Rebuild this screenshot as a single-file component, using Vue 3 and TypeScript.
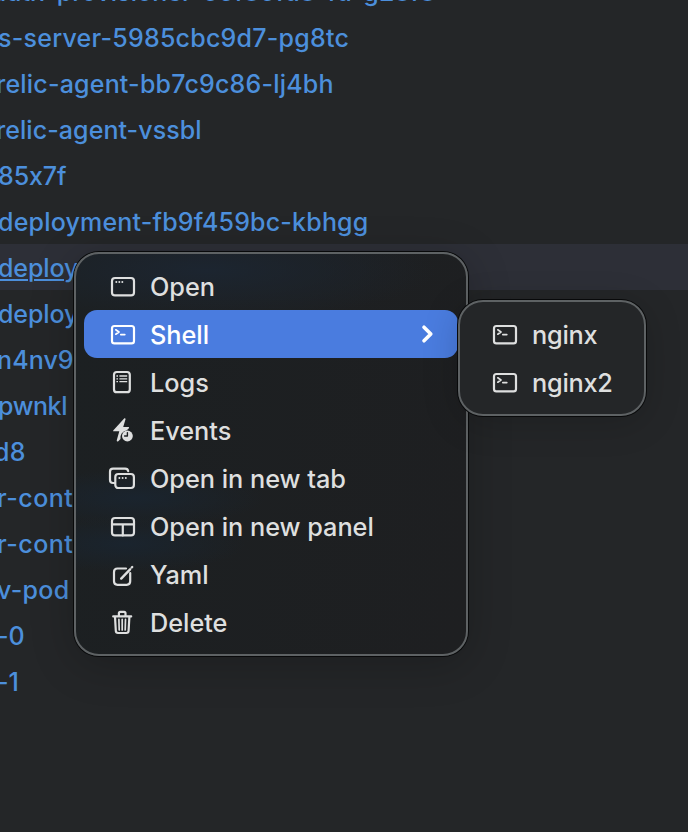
<script setup lang="ts">
interface Pod {
  name: string
  shift: number
  spacing: number
  active?: boolean
}

interface Dot {
  x: number
  y: number
}

type IconName = 'open' | 'shell' | 'logs' | 'events' | 'tabs' | 'panel' | 'edit' | 'trash'

interface Action {
  label: string
  icon: IconName
  submenu?: boolean
}

const pods: Pod[] = [
  { name: 'auth-provisioner-66f86fd8-fd-g28f8', shift: -8, spacing: 0.08 },
  { name: 's-server-5985cbc9d7-pg8tc', shift: -2, spacing: 0.24 },
  { name: 'relic-agent-bb7c9c86-lj4bh', shift: -4, spacing: 0.2 },
  { name: 'relic-agent-vssbl', shift: -4, spacing: 0.06 },
  { name: '85x7f', shift: -2, spacing: -0.1 },
  { name: 'deployment-fb9f459bc-kbhgg', shift: -2, spacing: 0.19 },
  { name: 'deploy', shift: -2, spacing: -0.1, active: true },
  { name: 'deploy', shift: -2, spacing: -0.1 },
  { name: 'n4nv9', shift: -3, spacing: 0.1 },
  { name: 'pwnkl', shift: -2, spacing: -0.4 },
  { name: 'd8', shift: -6, spacing: 0.3 },
  { name: 'r-cont', shift: -3, spacing: 0.5 },
  { name: 'r-cont', shift: -3, spacing: 0.5 },
  { name: 'v-pod', shift: -3, spacing: 0.3 },
  { name: '-0', shift: -3, spacing: 0 },
  { name: '-1', shift: -3, spacing: 0 },
]

const actions: Action[] = [
  { label: 'Open', icon: 'open' },
  { label: 'Shell', icon: 'shell', submenu: true },
  { label: 'Logs', icon: 'logs' },
  { label: 'Events', icon: 'events' },
  { label: 'Open in new tab', icon: 'tabs' },
  { label: 'Open in new panel', icon: 'panel' },
  { label: 'Yaml', icon: 'edit' },
  { label: 'Delete', icon: 'trash' },
]

const containers: Action[] = [
  { label: 'nginx', icon: 'shell' },
  { label: 'nginx2', icon: 'shell' },
]

const openDots: Dot[] = [{ x: 10.3, y: 12 }, { x: 13.3, y: 12 }, { x: 16.3, y: 12 }]
const tabDots: Dot[] = [{ x: 13.4, y: 16 }, { x: 16.6, y: 16 }, { x: 19.8, y: 16 }]

const menus = [
  { key: 'main', items: actions },
  { key: 'sub', items: containers },
]
</script>

<template>
  <main class="screen">
    <ul class="pods">
      <li v-for="(pod, i) in pods" :key="i" class="pod" :class="{ active: pod.active }">
        <a class="link" :style="{ marginLeft: pod.shift + 'px', letterSpacing: pod.spacing + 'px' }">{{ pod.name }}</a>
      </li>
    </ul>

    <ul v-for="menu in menus" :key="menu.key" class="menu" :class="menu.key">
      <li v-for="item in menu.items" :key="item.label" class="item" :class="{ selected: item.submenu }">
        <svg class="icon" viewBox="0 0 32 32">
          <template v-if="item.icon === 'open'">
            <rect x="6" y="8" width="22" height="17.4" rx="3" />
            <circle v-for="d in openDots" :key="d.x" class="solid" :cx="d.x" :cy="d.y" r="1" />
          </template>
          <template v-else-if="item.icon === 'shell'">
            <rect x="6" y="8" width="22" height="17.4" rx="2.4" />
            <path class="fine" d="M9.8 11.8 13 14l-3.2 2.2M14.8 16.6h4" />
          </template>
          <template v-else-if="item.icon === 'logs'">
            <rect x="8" y="6" width="15.8" height="20.2" rx="2.8" />
            <path class="hair" d="M10.4 10h1.6M10.4 12.8h1.6M10.4 15.6h1.6M13.4 10h7.8M13.4 12.8h7.8M13.4 15.6h7.8" />
          </template>
          <template v-else-if="item.icon === 'events'">
            <path class="solid" d="M18.4 4.2 7.2 16.4q-.4.8.5.9h5.6L10.7 26.5q.2 1.5 1.6.7l2.2-2.3q-.6-6.8 6.3-8.6l2.3-2.3q.2-.9-.7-.9h-5.2l2.4-8.1q-.2-1.1-1.2-.8Z" />
            <circle class="solid" cx="21.4" cy="22" r="5.4" />
            <path class="cut" d="M21.4 18.6V22h-2.8" />
          </template>
          <template v-else-if="item.icon === 'tabs'">
            <path d="M8.5 21H7q-3 0-3-3V9.7q0-3 3-3h12.2q2.6 0 3 2.5" />
            <rect x="9.3" y="12" width="18.6" height="14" rx="3" />
            <circle v-for="d in tabDots" :key="d.x" class="solid" :cx="d.x" :cy="d.y" r="1" />
          </template>
          <template v-else-if="item.icon === 'panel'">
            <rect x="6" y="8" width="22" height="17.4" rx="3" />
            <path d="M6 14.4h22M16.8 14.4v11" />
          </template>
          <template v-else-if="item.icon === 'edit'">
            <path d="M20 10.5h-8.5q-3.5 0-3.5 3.5v9.3q0 3.500 3.500 3.500h9.2q3.500 0 3.500-3.500V15" />
            <path class="pencil" d="m15.2 20.6 8.900-9.300M25.700 9.500l.5-.5" />
          </template>
          <template v-else>
            <path d="M7.2 10.4h18M12.900 10V7.300q0-1.400 1.400-1.400h3.800q1.400 0 1.400 1.400V10M9 10.800l.8 14q.1 2.200 2.200 2.200h8.400q2.100 0 2.200-2.200l.8-14" />
            <path class="fine" d="m12.9 13.4.3 10.600M16.200 13.400V24M19.500 13.400 19.200 24" />
          </template>
        </svg>
        <span class="label">{{ item.label }}</span>
        <svg v-if="item.submenu" class="chevron" viewBox="0 0 16 24">
          <path d="m4 5.2 6.8 6.8L4 18.8" />
        </svg>
      </li>
    </ul>
  </main>
</template>

<style>
body {
  margin: 0;
  background: #242628;
}
</style>

<style scoped>
.screen {
  position: relative;
  width: 688px;
  height: 832px;
  overflow: hidden;
  background: #242628;
  font-family: Inter, 'Liberation Sans', sans-serif;
  font-feature-settings: 'calt' 0;
}

ul {
  margin: 0;
  padding: 0;
  list-style: none;
}

.pods {
  margin-top: -32px;
}

.pod {
  display: flex;
  align-items: center;
  height: 46px;
}

.pod.active {
  background: #2d2f37;
}

.link {
  padding-top: 2px;
  color: #4c8fdc;
  font-size: 25px;
  font-weight: 450;
  line-height: 44px;
  white-space: nowrap;
}

.active .link {
  text-decoration: underline;
  text-decoration-thickness: 2px;
  text-underline-offset: 2px;
}

.menu {
  position: absolute;
  box-sizing: border-box;
  padding: 8px;
  border: 2px solid #5e6264;
  border-radius: 25px;
  color: #dedfdf;
}

.main {
  left: 74px;
  top: 252px;
  width: 394px;
  background:
    radial-gradient(ellipse 230px 50px at 130px 16px, #1c2530 0%, transparent 100%),
    radial-gradient(ellipse 130px 28px at 60px 244px, #1a242e 0%, transparent 100%),
    radial-gradient(ellipse 120px 28px at 50px 290px, #1a242e 0%, transparent 100%),
    linear-gradient(100deg, #1c2022, #1e1f21);
  box-shadow: 0 0 0 1px #08090a, 0 8px 44px rgba(0, 0, 0, 0.22);
}

.sub {
  left: 458px;
  top: 300px;
  width: 188px;
  background: #242628;
  box-shadow: 0 0 0 1px #08090a, 0 6px 36px rgba(0, 0, 0, 0.18);
}

.item {
  display: flex;
  align-items: center;
  gap: 12px;
  height: 48px;
  padding-left: 22px;
  border-radius: 13px;
}

.sub .item {
  padding-left: 20px;
}

.selected {
  background: #4a7cdf;
  color: #fff;
}

.icon {
  flex: none;
  width: 32px;
  height: 32px;
}

svg path,
svg rect {
  fill: none;
  stroke: currentColor;
  stroke-width: 2.2;
  stroke-linecap: round;
  stroke-linejoin: round;
}

svg .fine {
  stroke-width: 1.7;
}

svg .hair {
  stroke-width: 1.3;
  stroke-linecap: butt;
}

svg .solid {
  fill: currentColor;
  stroke: none;
}

svg .cut {
  stroke: #1d2022;
  stroke-width: 1.4;
}

svg .pencil {
  stroke-width: 2.4;
}

.label {
  flex: 1;
  padding-top: 2px;
  font-size: 25.3px;
  font-weight: 500;
  line-height: 46px;
  letter-spacing: -0.03px;
  white-space: nowrap;
}

.sub .label {
  letter-spacing: -0.25px;
}

.chevron {
  width: 16px;
  height: 24px;
  margin-right: 22px;
}

svg.chevron path {
  stroke-width: 3.6;
}
</style>
